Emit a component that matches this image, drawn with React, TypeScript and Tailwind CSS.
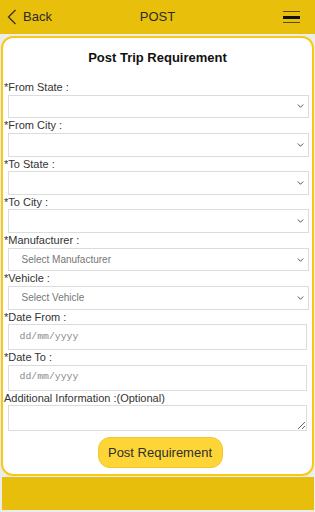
import React from "react";

const font = { fontFamily: '"Liberation Sans", Arial, sans-serif' };

function Chevron() {
  return (
    <svg width="7" height="5" viewBox="0 0 7 5" className="absolute right-[4px] top-1/2 -translate-y-1/2">
      <path d="M0.8 1 L3.5 3.8 L6.2 1" fill="none" stroke="#555" strokeWidth="1" />
    </svg>
  );
}

function Label({ children }: { children: React.ReactNode }) {
  return <div className="h-[14.5px] leading-[14.5px] text-[11px] text-[#333] pl-[1px] whitespace-nowrap">{children}</div>;
}

function SelectBox({ placeholder }: { placeholder?: string }) {
  return (
    <div className="relative ml-[5px] mr-[3.5px] h-[23.8px] border border-[#dcdcdc] bg-white flex items-center">
      <span className="pl-[12.5px] text-[10px] text-[#777]">{placeholder ?? ""}</span>
      <Chevron />
    </div>
  );
}

function DateBox() {
  return (
    <div className="ml-[5px] mr-[5.3px] h-[26px] border border-[#dcdcdc] bg-white flex items-center">
      <span
        className="pl-[10.5px] text-[9.8px] text-[#8a8a8a]"
        style={{ fontFamily: '"Liberation Mono", "DejaVu Sans Mono", monospace' }}
      >
        dd/mm/yyyy
      </span>
    </div>
  );
}

export default function App() {
  return (
    <div className="w-[315px] h-[512px] bg-[#ececec] flex flex-col overflow-hidden" style={font}>
      <div className="h-[34px] bg-[#e8bf0b] flex items-center relative shrink-0">
        <div className="flex items-center pl-[7px]">
          <svg width="10" height="16" viewBox="0 0 10 16">
            <path d="M8.5 1 L1.5 8 L8.5 15" fill="none" stroke="#3a3310" strokeWidth="1.3" />
          </svg>
          <span className="ml-[6px] text-[13px] text-[#2b2b2b]">Back</span>
        </div>
        <div className="absolute left-0 right-0 text-center text-[13px] text-[#2b2b2b] pointer-events-none">POST</div>
        <div className="ml-auto mr-[15px] w-[17px] flex flex-col">
          <div className="h-[1px] bg-[#5c4c08]" />
          <div className="h-[3px] bg-[#111] mt-[3.5px]" />
          <div className="h-[1px] bg-[#5c4c08] mt-[3px]" />
        </div>
      </div>

      <div className="mt-[1.5px] mx-[1px] h-[440px] shrink-0 bg-white border-2 border-[#f8c914] rounded-[12px] flex flex-col">
        <div className="pt-[11px] h-[29px] leading-[18px] text-center text-[13px] font-bold text-[#111]">
          Post Trip Requirement
        </div>
        <div className="h-[13.5px]" />
        <Label>*From State :</Label>
        <SelectBox />
        <Label>*From City :</Label>
        <SelectBox />
        <Label>*To State :</Label>
        <SelectBox />
        <Label>*To City :</Label>
        <SelectBox />
        <Label>*Manufacturer :</Label>
        <SelectBox placeholder="Select Manufacturer" />
        <Label>*Vehicle :</Label>
        <SelectBox placeholder="Select Vehicle" />
        <Label>*Date From :</Label>
        <DateBox />
        <Label>*Date To :</Label>
        <DateBox />
        <Label>Additional Information :(Optional)</Label>
        <textarea className="block ml-[5px] mr-[5.3px] h-[25.5px] border border-[#dcdcdc] bg-white outline-none resize-y" />
        <div className="flex justify-center pl-[5px] mt-[6px]">
          <button className="w-[125px] h-[31.4px] rounded-[12px] bg-[#fdd537] border border-[#f3c728] text-[13px] text-[#2e2e2e]">
            Post Requirement
          </button>
        </div>
      </div>

      <div className="mt-[1.5px] mx-[1.5px] h-[33px] bg-[#e6be0b] shrink-0" />
    </div>
  );
}
